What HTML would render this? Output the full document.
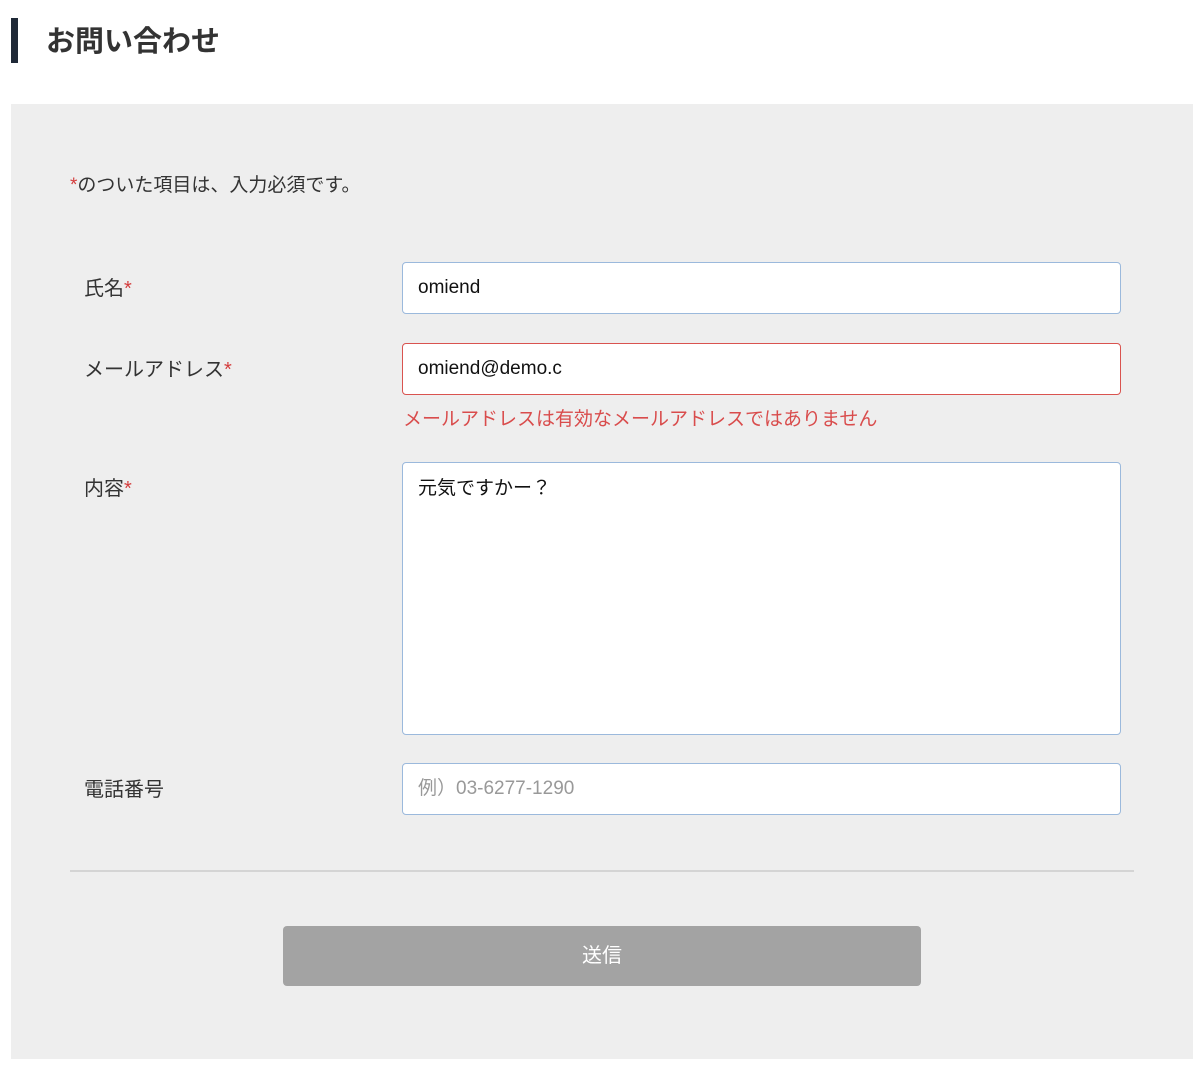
<!DOCTYPE html>
<html><head><meta charset="utf-8"><style>
*{box-sizing:border-box;margin:0;padding:0}
body{width:1200px;height:1070px;background:#fff;font-family:"Liberation Sans","Noto Sans CJK JP",sans-serif;color:#333;position:relative}
.abs{position:absolute}
.bar{left:11px;top:18px;width:7px;height:45px;background:#1f2937}
h1{position:absolute;left:46px;top:22px;font-size:29px;font-weight:bold;color:#333;line-height:40px}
.panel{left:11px;top:104px;width:1182px;height:955px;background:#eeeeee}
.t{font-size:19px;color:#333;line-height:24px}
.r{color:#d43c3c}
.inp{background:#fff;border:1.5px solid #9bb9dc;border-radius:4px;left:402px;width:719px;font-size:19px;color:#111;padding-left:15px}
.lbl{left:84px;font-size:20px;color:#333}
</style></head><body>
<div class="abs bar"></div>
<h1>お問い合わせ</h1>
<div class="abs panel"></div>
<div class="abs t" style="left:70px;top:174px"><span class="r">*</span>のついた項目は、入力必須です。</div>
<div class="abs lbl" style="top:272px">氏名<span class="r">*</span></div>
<div class="abs inp" style="top:262px;height:52px;line-height:50px">omiend</div>
<div class="abs lbl" style="top:353px">メールアドレス<span class="r">*</span></div>
<div class="abs inp" style="top:343px;height:52px;line-height:50px;border-color:#d9534f">omiend@demo.c</div>
<div class="abs" style="left:403px;top:404px;font-size:19px;color:#d94c4c">メールアドレスは有効なメールアドレスではありません</div>
<div class="abs lbl" style="top:472px">内容<span class="r">*</span></div>
<div class="abs inp" style="top:462px;height:273px;padding-top:14px;line-height:24px">元気ですかー？</div>
<div class="abs lbl" style="top:773px">電話番号</div>
<div class="abs inp" style="top:763px;height:52px;line-height:50px;color:#999">例）03-6277-1290</div>
<div class="abs" style="left:70px;top:870px;width:1064px;height:2px;background:#d4d4d4"></div>
<div class="abs" style="left:283px;top:926px;width:638px;height:60px;background:#a3a3a3;border-radius:4px;color:#fff;font-size:20px;text-align:center;line-height:60px">送信</div>
</body></html>
